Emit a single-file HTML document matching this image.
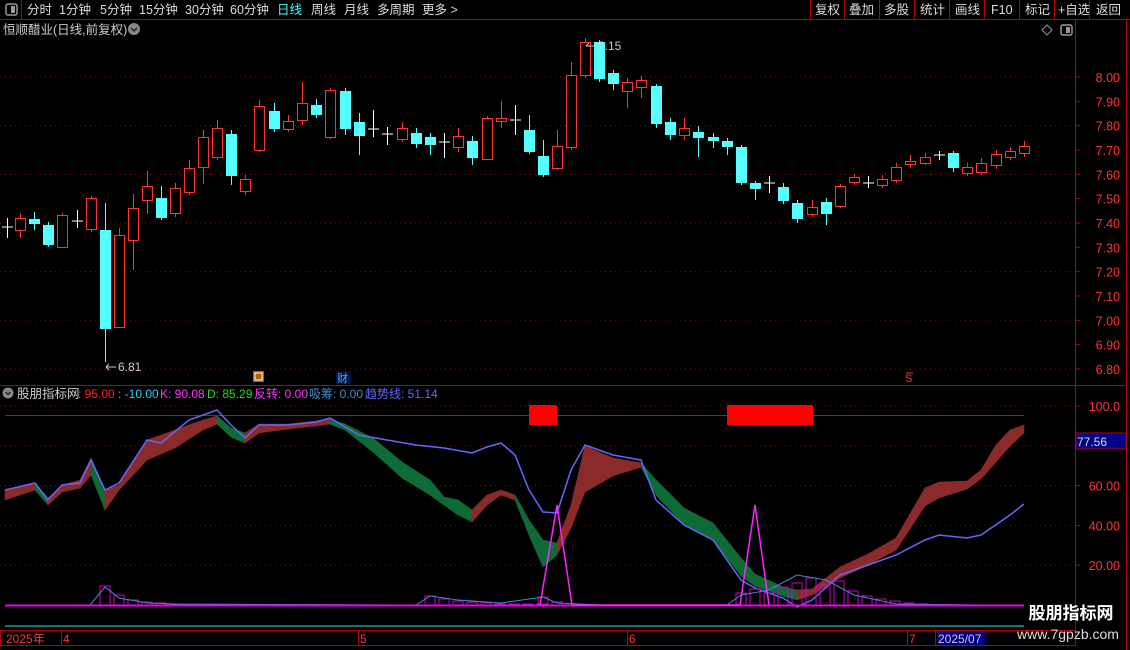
<!DOCTYPE html>
<html><head><meta charset="utf-8"><style>
*{margin:0;padding:0}
body{width:1130px;height:650px;background:#000;overflow:hidden;position:relative;font-family:"Liberation Sans","Noto Sans CJK SC",sans-serif;font-size:12px;color:#ccc}
</style></head><body>
<svg id="s" width="1130" height="650" style="position:absolute;left:0;top:0" xmlns="http://www.w3.org/2000/svg" font-family="Liberation Sans, Noto Sans CJK SC, sans-serif" font-size="12">
<line x1="0" y1="19.5" x2="1130" y2="19.5" stroke="#b00" />
<line x1="21.5" y1="0" x2="21.5" y2="19" stroke="#b00"/>
<rect x="6" y="4" width="11" height="11" rx="2" fill="none" stroke="#999" stroke-width="1.5"/><rect x="11" y="6" width="4" height="7" fill="#999"/>
<g fill="#ddd" font-size="12.5">
<text x="27" y="14">分时</text><text x="59" y="14">1分钟</text><text x="100" y="14">5分钟</text><text x="139" y="14">15分钟</text><text x="185" y="14">30分钟</text><text x="230" y="14">60分钟</text>
<text x="277" y="14" fill="#4ff">日线</text><text x="311" y="14">周线</text><text x="344" y="14">月线</text><text x="377" y="14">多周期</text><text x="422" y="14">更多 &gt;</text>
<text x="815" y="14">复权</text><text x="849" y="14">叠加</text><text x="884" y="14">多股</text><text x="920" y="14">统计</text><text x="955" y="14">画线</text><text x="991" y="14">F10</text><text x="1025" y="14">标记</text><text x="1058" y="14">+自选</text><text x="1096" y="14">返回</text>
</g>
<g stroke="#b00"><line x1="810.5" y1="0" x2="810.5" y2="19"/><line x1="844.5" y1="0" x2="844.5" y2="19"/><line x1="879.5" y1="0" x2="879.5" y2="19"/><line x1="914.5" y1="0" x2="914.5" y2="19"/><line x1="949.5" y1="0" x2="949.5" y2="19"/><line x1="984.5" y1="0" x2="984.5" y2="19"/><line x1="1019.5" y1="0" x2="1019.5" y2="19"/><line x1="1054.5" y1="0" x2="1054.5" y2="19"/><line x1="1089.5" y1="0" x2="1089.5" y2="19"/></g>
<text x="3" y="34" fill="#ccc" font-size="12.5">恒顺醋业(日线,前复权)</text>
<circle cx="134" cy="29" r="6" fill="#888"/><path d="M131 28 l3 3 l3 -3" stroke="#222" fill="none" stroke-width="1.5"/>
<path d="M1047 25 l5 5 l-5 5 l-5 -5z" fill="none" stroke="#999"/>
<rect x="1061" y="25" width="11" height="10" rx="2" fill="none" stroke="#999" stroke-width="1.5"/><rect x="1066" y="27" width="4" height="6" fill="#999"/>
<line x1="1075.5" y1="20" x2="1075.5" y2="630" stroke="#b00"/>
<line x1="1126.5" y1="20" x2="1126.5" y2="650" stroke="#b00"/>
<line x1="0" y1="385.5" x2="1126" y2="385.5" stroke="#b00"/>
<g id="grid"></g>
<g id="cand"></g>
<text x="118" y="371" fill="#ccc">6.81</text><path d="M106 367 h10 M106 367 l3 -3 M106 367 l3 3" stroke="#ccc" fill="none"/>
<text x="598" y="50" fill="#ccc">8.15</text><path d="M586 46 h10 M586 46 l3 -3" stroke="#ccc" fill="none"/>
<rect x="253" y="371" width="11" height="11" fill="#a60"/><rect x="255" y="373" width="7" height="7" fill="none" stroke="#fff"/>
<rect x="336" y="371" width="15" height="13" fill="#014"/><text x="337" y="382" fill="#4af" font-size="11">财</text>
<text x="905" y="382" fill="#f33" font-size="11">S</text><line x1="906" y1="373" x2="913" y2="373" stroke="#f33"/>
<circle cx="8" cy="393" r="5.5" fill="#888"/><path d="M5.5 392 l2.5 2.5 l2.5 -2.5" stroke="#222" fill="none" stroke-width="1.4"/>
<text x="17" y="398" fill="#ccc" font-size="12.5">股朋指标网</text>
<text x="78" y="398" fill="#f22">: 95.00</text><text x="118" y="398" fill="#2cf">: -10.00</text>
<text x="160" y="398" fill="#f3f">K: 90.08</text><text x="207" y="398" fill="#2d2">D: 85.29</text>
<text x="254" y="398" fill="#f3f">反转: 0.00</text><text x="309" y="398" fill="#48c">吸筹: 0.00</text><text x="365" y="398" fill="#66f">趋势线: 51.14</text>
<line x1="5" y1="415.5" x2="1024" y2="415.5" stroke="#d00"/>
<rect x="529" y="405" width="28" height="20" fill="#f00"/><rect x="727" y="405" width="86" height="20" fill="#f00"/>
<g id="ind"></g>
<line x1="5" y1="626" x2="1024" y2="626" stroke="#1ee"/>
<rect x="0.5" y="630.5" width="1075" height="15" fill="none" stroke="#b00"/>
<g stroke="#b00"><line x1="61.5" y1="630" x2="61.5" y2="646"/><line x1="358.5" y1="630" x2="358.5" y2="646"/><line x1="627.5" y1="630" x2="627.5" y2="646"/><line x1="907.5" y1="630" x2="907.5" y2="646"/><line x1="935.5" y1="630" x2="935.5" y2="646"/></g>
<g fill="#f33" font-size="12"><text x="6" y="643">2025年</text><text x="63" y="643">4</text><text x="360" y="643">5</text><text x="629" y="643">6</text><text x="909" y="643">7</text></g>
<rect x="937" y="631" width="48" height="14" fill="#008"/><text x="938" y="643" fill="#ccc">2025/07</text>
<rect x="1076" y="433" width="50" height="16" fill="#008" stroke="#b00"/><text x="1077" y="446" fill="#ddd">77.56</text>
<g id="ax" fill="#f33" font-size="12.5" text-anchor="end"></g>
<text x="1071" y="619" fill="#fff" font-size="17" font-weight="bold" text-anchor="middle">股朋指标网</text>
<text x="1068" y="639" fill="#ddd" font-size="14" text-anchor="middle">www.7gpzb.com</text>
</svg>
<script>
var NS="http://www.w3.org/2000/svg";
function el(p,t,a){var e=document.createElementNS(NS,t);for(var k in a)e.setAttribute(k,a[k]);document.getElementById(p).appendChild(e);return e;}
function yp(p){return 77+(8-p)*243.3;}
[8.0,7.8,7.6,7.4,7.2,7.0,6.8].forEach(function(p){el('grid','line',{x1:0,x2:1075,y1:yp(p),y2:yp(p),stroke:'#900','stroke-dasharray':'1,4'});});
for(var p=6.8;p<=8.001;p+=0.1){var t=el('ax','text',{x:1120,y:yp(p)+5});t.textContent=p.toFixed(2);el('grid','line',{x1:1075,x2:1080,y1:yp(p),y2:yp(p),stroke:'#b00'});}
[100,60,40,20].forEach(function(v){var y=605-v*1.99;var t=el('ax','text',{x:1120,y:y+5});t.textContent=v==100?'100.0':v.toFixed(2);el('grid','line',{x1:0,x2:1075,y1:y,y2:y,stroke:'#900','stroke-dasharray':'1,4'});el('grid','line',{x1:1075,x2:1080,y1:y,y2:y,stroke:'#b00'});});
el('grid','line',{x1:0,x2:1075,y1:446,y2:446,stroke:'#900','stroke-dasharray':'1,4'});
var C=[[7,226,230,'d',218,238],[20,218,230,'r',213,238],[34,219,224,'c',212,230],[48,225,245,'c',222,247],[62,215,247,'r',213,248],[77,220,223,'d',210,228],[91,198,229,'r',196,232],[105,230,329,'c',203,362],[119,235,327,'r',228,328],[133,208,240,'r',194,270],[147,186,200,'r',171,214],[161,198,218,'c',186,220],[175,188,213,'r',183,217],[189,168,192,'r',160,195],[203,137,167,'r',130,184],[217,128,157,'r',120,160],[231,134,176,'c',130,185],[245,179,191,'r',175,195],[259,106,150,'r',100,152],[274,111,129,'c',103,132],[288,121,129,'r',115,132],[302,103,120,'r',82,125],[316,105,115,'c',99,118],[330,90,137,'r',88,139],[345,91,129,'c',88,135],[359,122,136,'c',113,155],[373,128,130,'d',110,137],[387,133,135,'d',127,145],[402,128,139,'r',122,142],[416,133,144,'c',128,148],[430,137,145,'c',133,155],[444,141,143,'d',133,158],[458,136,147,'r',128,152],[472,141,158,'c',136,165],[487,118,159,'r',116,160],[501,118,121,'r',101,128],[515,119,121,'d',105,135],[529,130,152,'c',115,154],[543,156,175,'c',140,177],[557,146,168,'r',130,170],[571,75,147,'r',62,150],[585,42,75,'r',38,78],[599,42,79,'c',40,82],[613,73,84,'c',70,90],[627,82,91,'r',78,108],[641,80,87,'r',76,98],[656,86,124,'c',84,128],[670,122,135,'c',118,140],[684,128,135,'r',118,140],[698,132,138,'c',126,157],[713,137,141,'c',133,148],[727,141,147,'c',138,155],[741,147,183,'c',145,185],[755,183,189,'c',181,200],[769,182,184,'d',176,193],[783,187,201,'c',183,204],[797,203,219,'c',200,223],[812,207,214,'r',200,217],[826,202,214,'c',198,225],[840,186,206,'r',184,208],[854,177,182,'r',174,185],[868,182,184,'d',176,188],[882,179,185,'r',175,188],[896,167,180,'r',163,183],[910,161,164,'r',155,168],[925,157,163,'r',153,165],[939,154,156,'d',151,160],[953,153,168,'c',151,172],[967,167,173,'r',163,176],[981,163,172,'r',158,175],[996,154,165,'r',150,169],[1010,151,157,'r',147,160],[1024,146,153,'r',141,157]];
C.forEach(function(c){var x=c[0],col=c[3]=='r'?'#f33':c[3]=='c'?'#5ff':'#fff';
el('cand','line',{x1:x+.5,x2:x+.5,y1:c[4],y2:c[5],stroke:col});
if(c[3]=='d'){el('cand','line',{x1:x-5,x2:x+6,y1:c[1]+1,y2:c[1]+1,stroke:col});}
else if(c[3]=='c'){el('cand','rect',{x:x-5,y:c[1],width:11,height:Math.max(1,c[2]-c[1]),fill:col});}
else{el('cand','rect',{x:x-4.5,y:c[1]+.5,width:10,height:Math.max(1,c[2]-c[1]),fill:'#000',stroke:col});}});
var R=[[5,490,500,'b'],[35,483,490,'b'],[48,498,505,'g'],[62,485,492,'b'],[80,480,488,'b'],[91,458,475,'b'],[105,490,510,'g'],[119,485,490,'b'],[147,440,460,'b'],[175,430,448,'b'],[203,420,430,'b'],[217,416,424,'b'],[231,428,437,'g'],[245,433,443,'g'],[259,424,433,'b'],[288,424,429,'b'],[316,421,426,'b'],[330,419,424,'b'],[345,424,430,'g'],[373,438,452,'g'],[402,462,478,'g'],[430,480,495,'g'],[444,497,505,'g'],[458,500,515,'g'],[472,510,522,'g'],[487,495,505,'b'],[501,490,495,'b'],[515,495,500,'b'],[529,520,535,'g'],[543,540,567,'g'],[557,543,555,'g'],[571,505,528,'b'],[585,446,492,'b'],[613,458,476,'b'],[641,463,467,'b'],[656,480,495,'g'],[684,508,525,'g'],[713,523,540,'g'],[741,558,576,'g'],[755,574,586,'g'],[783,587,596,'g'],[797,590,600,'g'],[812,589,595,'b'],[840,567,578,'b'],[868,554,565,'b'],[896,538,550,'b'],[925,488,506,'b'],[939,482,498,'b'],[967,481,489,'b'],[981,470,479,'b'],[996,445,462,'b'],[1010,430,446,'b'],[1024,425,433,'b']];
for(var i=1;i<R.length;i++){var a=R[i-1],b=R[i];el('ind','polygon',{points:a[0]+','+a[1]+' '+b[0]+','+b[1]+' '+b[0]+','+b[2]+' '+a[0]+','+a[2],fill:b[3]=='b'?'#8b2a2a':'#0e6b35',stroke:b[3]=='b'?'#8b2a2a':'#0e6b35','stroke-width':0.6});}
var B=[[5,490],[35,483],[48,500],[62,485],[80,483],[91,460],[105,490],[119,483],[147,440],[161,443],[189,420],[217,410],[231,425],[245,438],[259,425],[288,425],[316,422],[330,418],[359,435],[387,440],[416,445],[444,448],[472,453],[487,447],[501,443],[515,455],[529,490],[543,512],[557,513],[571,470],[585,445],[613,455],[641,460],[656,500],[684,525],[713,540],[741,580],[755,588],[783,598],[797,607],[812,600],[840,575],[868,565],[896,555],[925,540],[939,535],[967,538],[981,535],[1010,515],[1024,504]];
el('ind','polyline',{points:B.map(function(p){return p.join(',')}).join(' '),fill:'none',stroke:'#66f','stroke-width':1.5});
function bars(x0,hs){hs.forEach(function(h,i){if(h>0)el('ind','rect',{x:x0+i*14-5,y:605-h,width:10,height:h,fill:'none',stroke:'#c0c'});});}
bars(105,[19,10,5,3,2,1]);bars(430,[9,6,4,3,2,1,1,1,1]);bars(543,[8,3]);bars(741,[12,16,12,18,22,27,20,24,14,9,6,4,2,1]);
el('ind','polyline',{points:'90,605 105,587 119,598 147,603 175,604 416,605 430,596 458,600 501,603 543,597 557,603 600,605 727,605 741,595 769,590 797,575 826,580 854,595 896,604 985,605',fill:'none',stroke:'#48c'});
el('ind','line',{x1:5,x2:1024,y1:605.5,y2:605.5,stroke:'#e0e','stroke-width':2});
el('ind','polyline',{points:'540,605 557,505 572,605 740,605 755,505 769,605',fill:'none',stroke:'#f2f','stroke-width':1.5});
</script>
</body></html>
